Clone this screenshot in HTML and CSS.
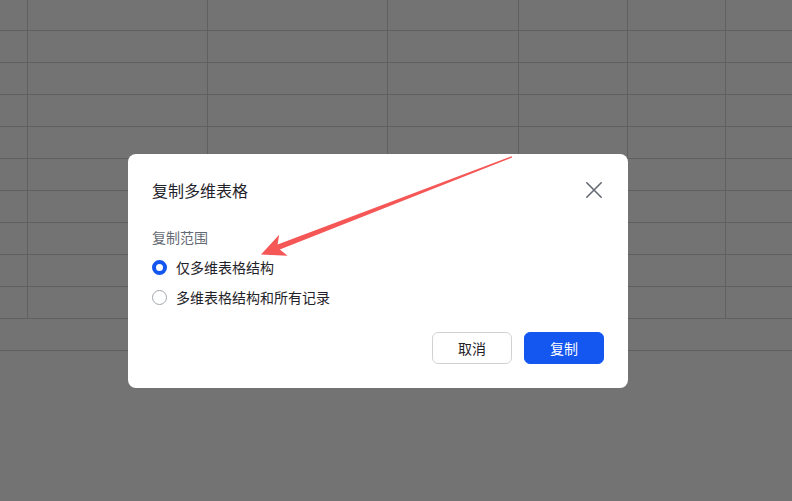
FILE: index.html
```html
<!DOCTYPE html>
<html lang="zh-CN">
<head>
    <meta charset="UTF-8">
    <meta name="viewport" content="width=device-width, initial-scale=1.0">
    <title>复制多维表格</title>
    <link rel="stylesheet" href="styles.css">
</head>
<body>
    <div class="sheet">
        <div class="row"><div class="cell"></div><div class="cell"></div><div class="cell"></div><div class="cell"></div><div class="cell"></div><div class="cell"></div><div class="cell"></div></div>
        <div class="row"><div class="cell"></div><div class="cell"></div><div class="cell"></div><div class="cell"></div><div class="cell"></div><div class="cell"></div><div class="cell"></div></div>
        <div class="row"><div class="cell"></div><div class="cell"></div><div class="cell"></div><div class="cell"></div><div class="cell"></div><div class="cell"></div><div class="cell"></div></div>
        <div class="row"><div class="cell"></div><div class="cell"></div><div class="cell"></div><div class="cell"></div><div class="cell"></div><div class="cell"></div><div class="cell"></div></div>
        <div class="row"><div class="cell"></div><div class="cell"></div><div class="cell"></div><div class="cell"></div><div class="cell"></div><div class="cell"></div><div class="cell"></div></div>
        <div class="row"><div class="cell"></div><div class="cell"></div><div class="cell"></div><div class="cell"></div><div class="cell"></div><div class="cell"></div><div class="cell"></div></div>
        <div class="row"><div class="cell"></div><div class="cell"></div><div class="cell"></div><div class="cell"></div><div class="cell"></div><div class="cell"></div><div class="cell"></div></div>
        <div class="row"><div class="cell"></div><div class="cell"></div><div class="cell"></div><div class="cell"></div><div class="cell"></div><div class="cell"></div><div class="cell"></div></div>
        <div class="row"><div class="cell"></div><div class="cell"></div><div class="cell"></div><div class="cell"></div><div class="cell"></div><div class="cell"></div><div class="cell"></div></div>
        <div class="row"><div class="cell"></div><div class="cell"></div><div class="cell"></div><div class="cell"></div><div class="cell"></div><div class="cell"></div><div class="cell"></div></div>
        <div class="add-row"></div>
    </div>

    <div class="dialog">
        <div class="dialog-header">
            <div class="dialog-title">复制多维表格</div>
            <button class="close-btn" aria-label="关闭">
                <svg width="20" height="20" viewBox="0 0 20 20">
                    <path d="M2.8 2.8 L17.2 17.2 M17.2 2.8 L2.8 17.2" stroke="#646a73" stroke-width="1.6" stroke-linecap="round" fill="none"/>
                </svg>
            </button>
        </div>
        <div class="field-label">复制范围</div>
        <div class="options">
            <label class="option">
                <span class="radio checked"></span>
                <span>仅多维表格结构</span>
            </label>
            <label class="option">
                <span class="radio"></span>
                <span>多维表格结构和所有记录</span>
            </label>
        </div>
        <div class="dialog-footer">
            <button class="btn btn-default">取消</button>
            <button class="btn btn-primary">复制</button>
        </div>
    </div>

    <!-- red pointer arrow drawn on top -->
    <svg class="annotation" width="792" height="501" viewBox="0 0 792 501">
        <polygon fill="#f55656" points="511.5,156.3 512.2,157.6 279.8,249.6 287.6,255.8 261,254.5 279.2,234.8 277.6,244.6"/>
    </svg>
</body>
</html>
```

FILE: styles.css
```css
html, body {
    margin: 0;
    padding: 0;
    height: 100%;
    overflow: hidden;
    background: #737373;
    font-family: "Noto Sans CJK SC", "Noto Sans", sans-serif;
}

/* spreadsheet behind the mask */
.sheet {
    width: 100%;
}
.row {
    display: grid;
    grid-template-columns: 28px 180px 180px 131px 109px 98px 1fr;
    height: 32px;
    box-sizing: border-box;
    border-bottom: 1px solid #606060;
}
.row:first-child {
    height: 31px;
}
.cell {
    border-right: 1px solid #606060;
}
.cell:last-child {
    border-right: none;
}
.add-row {
    height: 32px;
    box-sizing: border-box;
    border-bottom: 1px solid #606060;
}

/* modal */
.dialog {
    position: fixed;
    left: 128px;
    top: 154px;
    width: 500px;
    box-sizing: border-box;
    padding: 24px;
    background: #fff;
    border-radius: 8px;
    color: #1f2329;
}
.dialog-header {
    display: flex;
    justify-content: space-between;
    align-items: center;
    height: 24px;
}
.dialog-title {
    font-size: 16px;
    line-height: 24px;
    font-weight: 400;
}
.close-btn {
    background: none;
    border: none;
    padding: 0;
    width: 20px;
    height: 20px;
    display: flex;
    cursor: pointer;
}
.field-label {
    margin-top: 24px;
    font-size: 14px;
    line-height: 22px;
    color: #646a73;
}
.options {
    margin-top: 4px;
}
.option {
    display: flex;
    align-items: center;
    gap: 9px;
    height: 30px;
    font-size: 14px;
    line-height: 22px;
    cursor: pointer;
}
.radio {
    width: 15px;
    height: 15px;
    box-sizing: border-box;
    border: 1px solid #a3a7ad;
    border-radius: 50%;
    flex-shrink: 0;
}
.radio.checked {
    border: 4.5px solid #1456f0;
    background: #fff;
}
.dialog-footer {
    display: flex;
    justify-content: flex-end;
    gap: 12px;
    margin-top: 20px;
}
.btn {
    width: 80px;
    height: 32px;
    box-sizing: border-box;
    border-radius: 6px;
    font-family: inherit;
    font-size: 14px;
    cursor: pointer;
}
.btn-default {
    background: #fff;
    border: 1px solid #d0d3d6;
    color: #1f2329;
}
.btn-primary {
    background: #1456f0;
    border: 1px solid #1456f0;
    color: #fff;
}

.annotation {
    position: fixed;
    left: 0;
    top: 0;
    pointer-events: none;
}
```
